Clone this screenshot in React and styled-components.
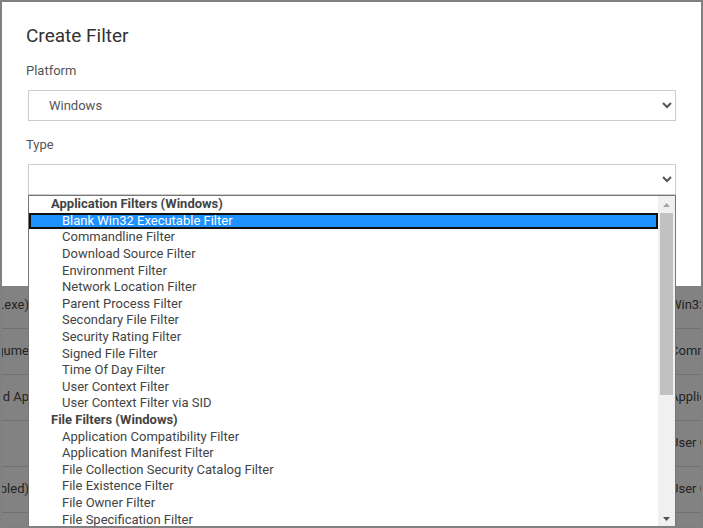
import React from "react";
import styled, { createGlobalStyle } from "styled-components";

const GlobalStyle = createGlobalStyle`
  *, *::before, *::after { box-sizing: border-box; }
  body {
    margin: 0;
    font-family: Roboto, "Liberation Sans", sans-serif;
    font-size: 13px;
    color: #444;
    background: #808080;
  }
`;

const Page = styled.div`
  display: flex;
  flex-direction: column;
  height: 100vh;
  overflow: hidden;
  border: 2px solid #808080;
  background: #828282;
`;

const Dialog = styled.form`
  display: flex;
  flex-direction: column;
  flex-shrink: 0;
  padding: 22px 25px 77px 24px;
  background: #fff;
`;

const Title = styled.h1`
  margin: 0 0 13px;
  font-size: 19px;
  line-height: 24px;
  font-weight: 400;
  color: #333;
`;

const Label = styled.label`
  margin-bottom: 9px;
  line-height: 20px;
  color: #555;
`;

const SelectWrap = styled.div`
  position: relative;
  margin: 0 0 14px 2px;
`;

const Select = styled.select`
  display: block;
  width: 100%;
  height: 31px;
  padding: 0 0 0 16px;
  border: 1px solid #ccc;
  border-radius: 0;
  background: #fff;
  color: #555;
  font: inherit;
  outline: none;
`;

const Popup = styled.div`
  position: absolute;
  z-index: 1;
  top: 100%;
  left: 0;
  right: 0;
  display: flex;
  height: calc(100vh - 197px);
  overflow: hidden;
  border: 1px solid #767676;
  border-bottom: 0;
  background: #fff;
`;

const OptionList = styled.ul`
  flex: 1;
  display: grid;
  grid-template-rows: repeat(20, 1fr);
  height: 332px;
  margin: 0;
  padding: 0;
  list-style: none;
`;

const GroupLabel = styled.li`
  display: flex;
  align-items: center;
  min-height: 0;
  padding-left: 22px;
  line-height: 16px;
  font-weight: 700;
`;

const Option = styled.li`
  display: flex;
  align-items: center;
  min-height: 0;
  padding-left: 33px;
  line-height: 16px;
  color: ${(p) => (p.$active ? "#fff" : "#444")};
  background: ${(p) => (p.$active ? "#1e90ff" : "transparent")};
  outline: ${(p) => (p.$active ? "2px solid #101010" : "none")};
  outline-offset: -2px;
`;

const ScrollTrack = styled.div`
  display: flex;
  flex-direction: column;
  width: 17px;
  padding: 0 2px;
  background: #f0f0f0;
`;

const ScrollArrow = styled.svg`
  display: block;
  flex: none;
  width: 13px;
  height: 17px;
  fill: ${(p) => p.$color};
`;

const ScrollThumb = styled.div`
  height: 55%;
  margin-bottom: auto;
  background: #c1c1c1;
`;

const Table = styled.table`
  width: 100%;
  table-layout: fixed;
  border-collapse: collapse;
  color: #222;
`;

const Row = styled.tr`
  height: 46px;
  border-bottom: 1px solid #707070;
  &:first-child { height: 42px; }
`;

const Cell = styled.td`
  width: ${(p) => (p.$last ? "31px" : "auto")};
  padding: 0 0 15px;
  overflow: hidden;
  vertical-align: bottom;
  white-space: nowrap;
  line-height: 16px;
`;

const NameEnd = styled.div`
  display: flex;
  justify-content: flex-end;
  width: 27px;
`;

const groups = [
  {
    label: "Application Filters (Windows)",
    options: [
      "Blank Win32 Executable Filter",
      "Commandline Filter",
      "Download Source Filter",
      "Environment Filter",
      "Network Location Filter",
      "Parent Process Filter",
      "Secondary File Filter",
      "Security Rating Filter",
      "Signed File Filter",
      "Time Of Day Filter",
      "User Context Filter",
      "User Context Filter via SID",
    ],
  },
  {
    label: "File Filters (Windows)",
    options: [
      "Application Compatibility Filter",
      "Application Manifest Filter",
      "File Collection Security Catalog Filter",
      "File Existence Filter",
      "File Owner Filter",
      "File Specification Filter",
    ],
  },
];

const rows = [
  [".exe)", "Win32"],
  ["gume", "Comm"],
  ["d Ap", "Applic"],
  ["", "User C"],
  ["bled)", "User C"],
  ["", ""],
];

const activeOption = "Blank Win32 Executable Filter";

export default function App() {
  return (
    <>
      <GlobalStyle />
      <Page>
        <Dialog aria-labelledby="dialog-title">
          <Title id="dialog-title">Create Filter</Title>
          <Label htmlFor="platform">Platform</Label>
          <SelectWrap>
            <Select id="platform" defaultValue="Windows">
              <option>Windows</option>
            </Select>
          </SelectWrap>
          <Label htmlFor="type">Type</Label>
          <SelectWrap>
            <Select id="type" defaultValue="">
              <option value="" aria-label="None" />
              {groups.map((g) => (
                <optgroup key={g.label} label={g.label}>
                  {g.options.map((o) => (
                    <option key={o}>{o}</option>
                  ))}
                </optgroup>
              ))}
            </Select>
            <Popup>
              <OptionList role="listbox" aria-label="Type">
                {groups.map((g) => (
                  <React.Fragment key={g.label}>
                    <GroupLabel role="presentation">{g.label}</GroupLabel>
                    {g.options.map((o) => (
                      <Option
                        key={o}
                        role="option"
                        aria-selected={o === activeOption}
                        $active={o === activeOption}
                      >
                        {o}
                      </Option>
                    ))}
                  </React.Fragment>
                ))}
              </OptionList>
              <ScrollTrack aria-hidden="true">
                <ScrollArrow viewBox="0 0 13 17" $color="#a3a3a3">
                  <path d="M3 11h7L6.5 7z" />
                </ScrollArrow>
                <ScrollThumb />
                <ScrollArrow viewBox="0 0 13 17" $color="#505050">
                  <path d="M3 8h7l-3.500 4z" />
                </ScrollArrow>
              </ScrollTrack>
            </Popup>
          </SelectWrap>
        </Dialog>
        <Table>
          <tbody>
            {rows.map(([name, type], i) => (
              <Row key={i}>
                <Cell>
                  <NameEnd>{name}</NameEnd>
                </Cell>
                <Cell $last>{type}</Cell>
              </Row>
            ))}
          </tbody>
        </Table>
      </Page>
    </>
  );
}
